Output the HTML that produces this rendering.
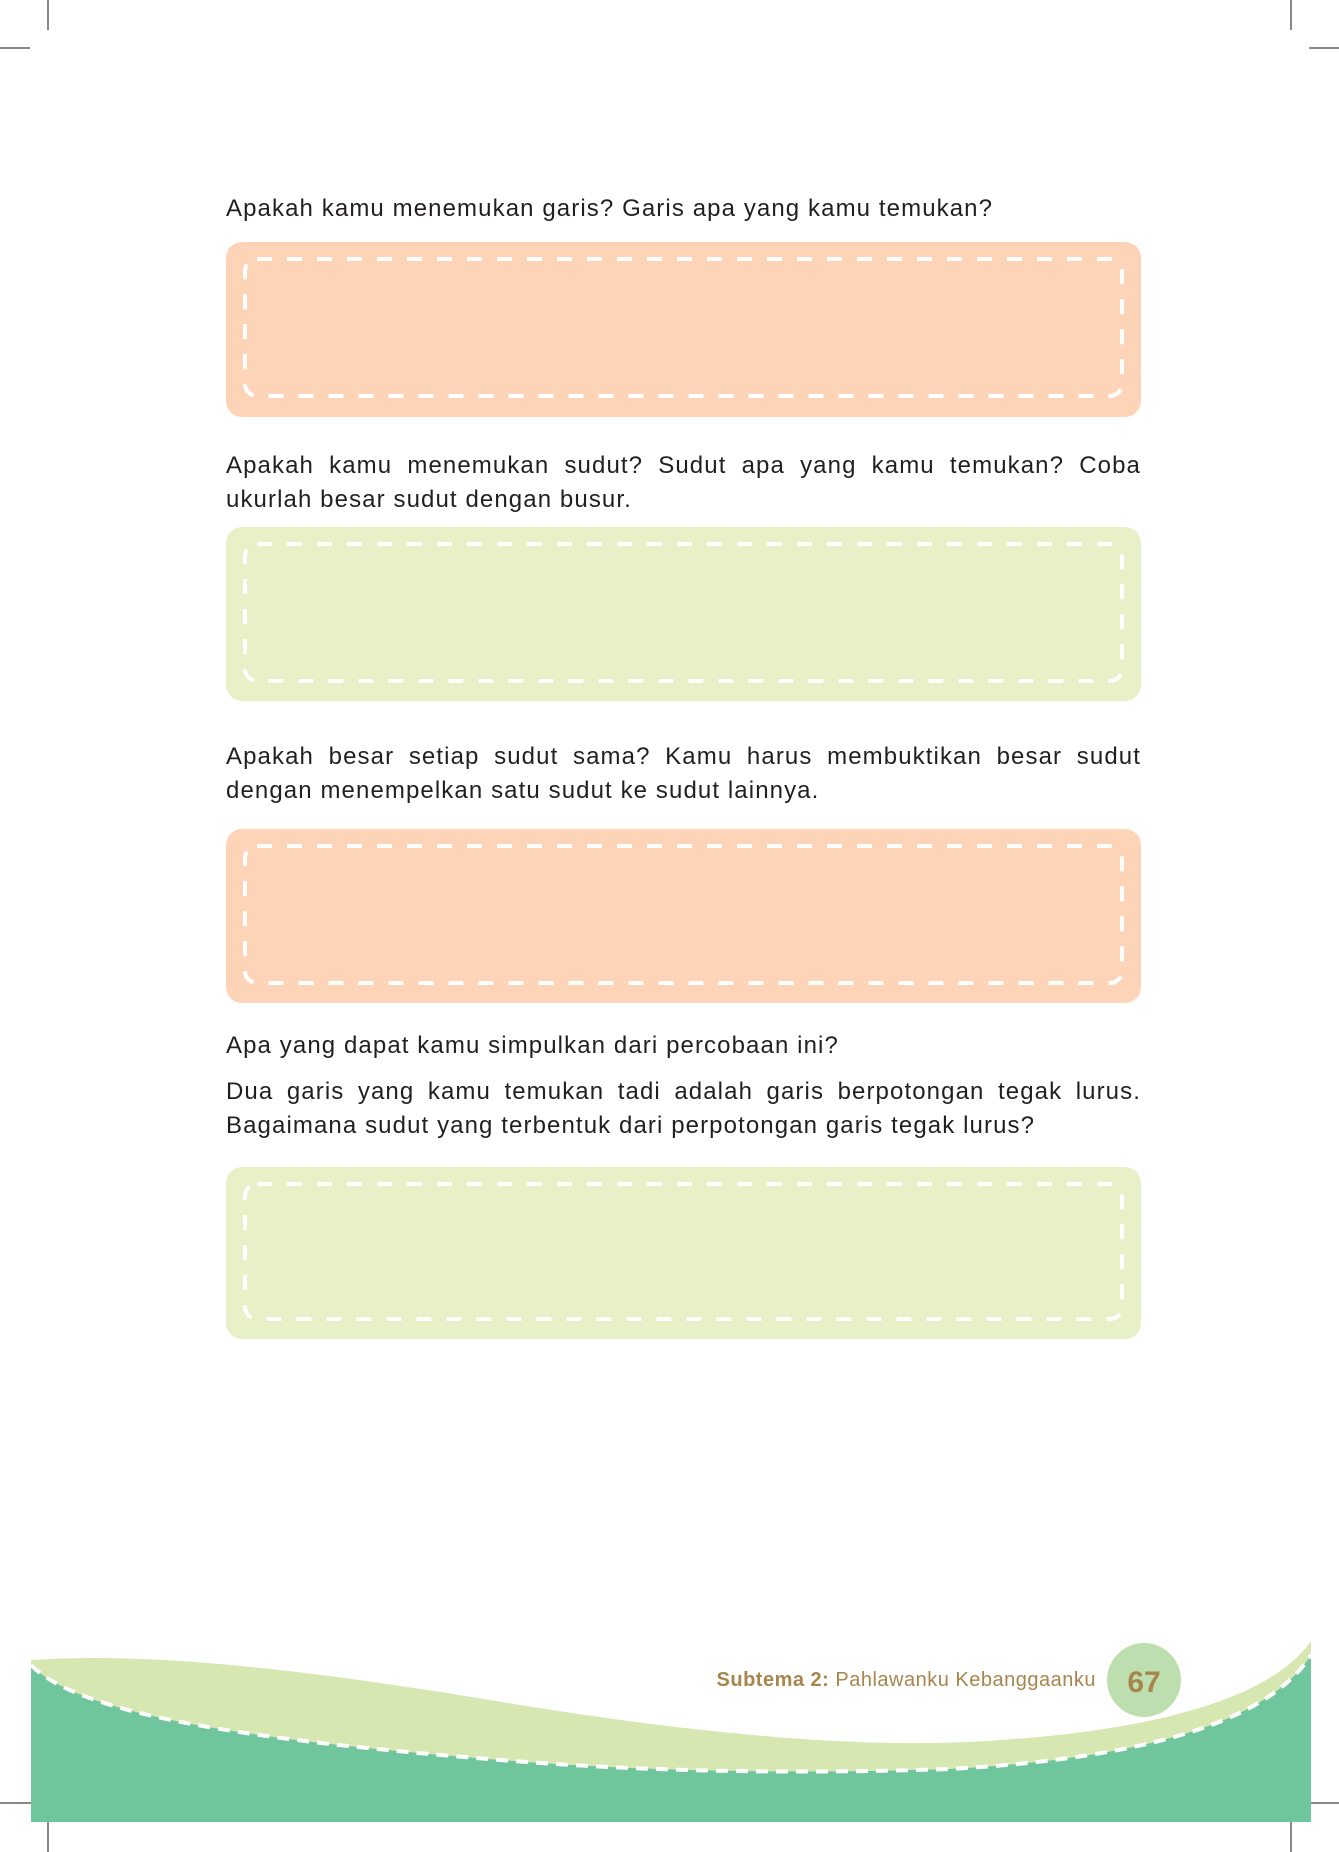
<!DOCTYPE html>
<html><head><meta charset="utf-8"><style>
html,body{margin:0;padding:0;background:#fff;}
body{width:1339px;height:1852px;position:relative;overflow:hidden;font-family:"Liberation Sans",sans-serif;color:#231f20;}
.t{position:absolute;left:226px;width:915px;font-size:24px;line-height:34px;letter-spacing:1.1px;white-space:nowrap;}
.t .f{display:block;text-align:justify;text-align-last:justify;white-space:normal;}
.box{position:absolute;left:226px;width:915px;border-radius:16px;}
.box svg{position:absolute;left:0;top:0;}
.o{background:#fdd4b7;}
.g{background:#e8f0c7;}
</style></head><body>
<svg width="1339" height="1852" style="position:absolute;left:0;top:0">
<g stroke="#888" stroke-width="2">
<line x1="48" y1="0" x2="48" y2="30"/><line x1="1291" y1="0" x2="1291" y2="30"/>
<line x1="0" y1="48" x2="30" y2="48"/><line x1="1309" y1="48" x2="1339" y2="48"/>
<line x1="0" y1="1803" x2="31" y2="1803"/><line x1="1311" y1="1803" x2="1339" y2="1803"/>
<line x1="48" y1="1822" x2="48" y2="1852"/><line x1="1291" y1="1822" x2="1291" y2="1852"/>
</g>
<path d="M31,1660 C150,1652 300,1668 520,1705 C750,1742 900,1748 1000,1740 C1150,1730 1270,1700 1311,1641 L1311,1822 L31,1822Z" fill="#d6e7b2"/>
<path d="M31,1665 C80,1715 250,1740 500,1760 C650,1772 800,1774 950,1769 C1150,1758 1270,1720 1311,1655 L1311,1822 L31,1822Z" fill="#6fc69c"/>
<path d="M31,1665 C80,1715 250,1740 500,1760 C650,1772 800,1774 950,1769 C1150,1758 1270,1720 1311,1655" fill="none" stroke="#fff" stroke-width="4" stroke-dasharray="12 8"/>
<circle cx="1144" cy="1680" r="37" fill="#bddfb0"/>
<text x="1144" y="1692" text-anchor="middle" font-family="Liberation Sans" font-weight="bold" font-size="30" fill="#a8854c">67</text>
<text x="1096" y="1686" text-anchor="end" font-family="Liberation Sans" font-size="20" letter-spacing="0.5" fill="#a8854c"><tspan font-weight="bold">Subtema 2:</tspan> Pahlawanku Kebanggaanku</text>
</svg>

<div class="t" style="top:192px">Apakah kamu menemukan garis? Garis apa yang kamu temukan?</div>
<div class="box o" style="top:242px;height:175px"><svg width="915" height="175"><rect x="19" y="17" width="877" height="137" rx="12" fill="none" stroke="#fff" stroke-width="4" stroke-dasharray="15 15"/></svg></div>

<div class="t" style="top:449px"><span class="f">Apakah kamu menemukan sudut? Sudut apa yang kamu temukan? Coba</span>ukurlah besar sudut dengan busur.</div>
<div class="box g" style="top:527px;height:174px"><svg width="915" height="174"><rect x="19" y="17" width="877" height="137" rx="12" fill="none" stroke="#fff" stroke-width="4" stroke-dasharray="15 15"/></svg></div>

<div class="t" style="top:740px"><span class="f">Apakah besar setiap sudut sama? Kamu harus membuktikan besar sudut</span>dengan menempelkan satu sudut ke sudut lainnya.</div>
<div class="box o" style="top:829px;height:174px"><svg width="915" height="174"><rect x="19" y="17" width="877" height="137" rx="12" fill="none" stroke="#fff" stroke-width="4" stroke-dasharray="15 15"/></svg></div>

<div class="t" style="top:1029px">Apa yang dapat kamu simpulkan dari percobaan ini?</div>
<div class="t" style="top:1075px"><span class="f">Dua garis yang kamu temukan tadi adalah garis berpotongan tegak lurus.</span>Bagaimana sudut yang terbentuk dari perpotongan garis tegak lurus?</div>
<div class="box g" style="top:1167px;height:172px"><svg width="915" height="172"><rect x="19" y="17" width="877" height="135" rx="12" fill="none" stroke="#fff" stroke-width="4" stroke-dasharray="15 15"/></svg></div>
</body></html>
